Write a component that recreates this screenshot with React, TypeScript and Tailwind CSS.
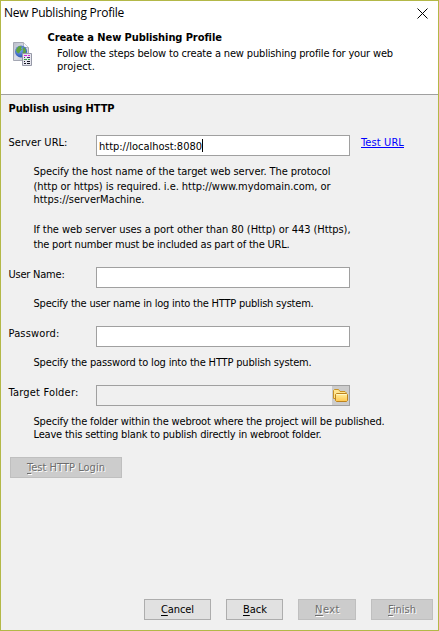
import { useLayoutEffect, useRef, useState, type ReactNode } from "react";

/** One line of text whose tracking is tuned so that it spans the given advance width. */
function Line({ w, className = "", children }: { w: number; className?: string; children: ReactNode }) {
  const ref = useRef<HTMLSpanElement>(null);
  const [spacing, setSpacing] = useState(0);
  useLayoutEffect(() => {
    const el = ref.current;
    if (!el) return;
    const count = (el.textContent ?? "").length;
    setSpacing((w - el.getBoundingClientRect().width) / count);
  }, [w]);
  return (
    <div className={`h-[13px] leading-[13px] whitespace-nowrap ${className}`}>
      <span ref={ref} style={{ letterSpacing: spacing }}>
        {children}
      </span>
    </div>
  );
}

function Field({ label, w, children }: { label: string; w: number; children: ReactNode }) {
  return (
    <div className="flex h-[21px] items-start">
      <div className="w-[88px] shrink-0 pt-px pl-[0.5px]">
        <Line w={w}>{label}</Line>
      </div>
      {children}
    </div>
  );
}

const box = "flex h-[21px] w-[254px] shrink-0 border border-[#a0a0a0]";

function Button({ text, w, disabled, className }: { text: string; w: number; disabled?: boolean; className: string }) {
  const tone = disabled
    ? "border-[#bfbfbf] bg-[#cccccc] text-[#6d6d6d] [text-shadow:1px_1px_0_#fff]"
    : "border-[#adadad] bg-[#e1e1e1] text-black";
  return (
    <button disabled={disabled} className={`h-[21px] shrink-0 border pt-[3px] pb-[3px] pl-[16px] text-left ${tone} ${className}`}>
      <Line w={w}>
        <span className="underline decoration-1 underline-offset-2">{text[0]}</span>
        {text.slice(1)}
      </Line>
    </button>
  );
}

function PublishIcon() {
  return (
    <svg width="20" height="25" viewBox="0 0 20 25" className="shrink-0">
      <defs>
        <linearGradient id="page" x2="1" y2="1">
          <stop stopColor="#b9bcc9" />
          <stop offset=".5" stopColor="#dcdfe7" />
          <stop offset="1" stopColor="#b6b9c7" />
        </linearGradient>
        <radialGradient id="globe" cx=".4" cy=".35" r=".7">
          <stop stopColor="#86b2f5" />
          <stop offset="1" stopColor="#244eb0" />
        </radialGradient>
      </defs>
      <path d="M.5.5h10l5 5v13H.5z" fill="url(#page)" stroke="#a4a7b3" />
      <path d="M10.500.5v5h5" fill="#f8f8fb" stroke="#b1b4bf" />
      <circle cx="8" cy="9.500" r="6" fill="url(#globe)" />
      <path d="M4 6l2-2 3 .5-1 2 1 1-2 2-1 2-2-1-1-2zM11 5l2 3-.5 4-2 1-1-2 1-2-1-2z" fill="#61a43d" />
      <path d="M9.500 11.500h9v12h-9z" fill="#e6e6ee" stroke="#9699a7" />
      <g shapeRendering="crispEdges">
        <path d="M11 13.500h3m1 0h2" stroke="#d423df" />
        <path d="M11 15.500h1m2 0h3" stroke="#542776" />
        <path d="M11 17.500h3m1 0h2" stroke="#36ad3e" />
        <path d="M11 19.500h1m2 0h3M11 21.500h2m1 0h3" stroke="#171724" />
      </g>
    </svg>
  );
}

function FolderIcon() {
  return (
    <svg width="15" height="13" viewBox="0 0 15 13">
      <defs>
        <linearGradient id="folder" x2="0" y2="1">
          <stop stopColor="#fff0a0" />
          <stop offset="1" stopColor="#ffc64d" />
        </linearGradient>
      </defs>
      <path d="M.5 9.500v-8l1-1h4l1.500 2h5l1 1v6z" fill="#ffe590" stroke="#c99225" />
      <path d="M2.500 5.500l1-1h10l1 1v6l-1 1h-10l-1-1z" fill="url(#folder)" stroke="#bd831d" />
      <path d="M3.500 5.500h10" stroke="#fff7c7" />
    </svg>
  );
}

export default function App() {
  return (
    <div className="flex h-[631px] w-[439px] flex-col border border-[#b3b847] bg-[#f0f0f0] font-['DejaVu_Sans_Condensed','DejaVu_Sans',sans-serif] text-[11px] font-stretch-condensed text-black">
      <header className="h-[94px] shrink-0 border-b border-[#a0a0a0] bg-white">
        <div className="flex h-[25px] justify-between pt-[5px] pr-[10px] pl-[3px]">
          <Line w={120} className="font-['Open_Sans',sans-serif] text-[12px] font-stretch-normal">New Publishing Profile</Line>
          <svg width="11" height="11" viewBox="0 0 11 11" className="mt-[2px]" stroke="#000" strokeWidth="1">
            <path d="M.5.5l10 10M10.500.5l-10 10" />
          </svg>
        </div>
        <div className="flex pt-[5px] pl-[12px]">
          <div className="mt-[11px] h-[25px]">
            <PublishIcon />
          </div>
          <div className="pl-[14.5px]">
            <Line w={174} className="font-bold">Create a New Publishing Profile</Line>
            <div className="mt-[3px] pl-[9.5px]">
              <Line w={336}>Follow the steps below to create a new publishing profile for your web</Line>
              <Line w={38}>project.</Line>
            </div>
          </div>
        </div>
      </header>

      <main className="flex-1 pt-[7px] pl-[7px]">
        <Line w={106} className="pl-[0.5px] font-bold">Publish using HTTP</Line>

        <div className="mt-[20px]">
          <Field label="Server URL:" w={59}>
            <div className={`${box} bg-white pt-[4px] pl-[2px]`}>
              <Line w={103}>http://localhost:8080</Line>
              <span className="-mt-px h-[13px] w-px bg-black" />
            </div>
            <a className="pt-px pl-[11px] text-[#0000ff]">
              <Line w={43} className="underline decoration-1 underline-offset-1">Test URL</Line>
            </a>
          </Field>
        </div>
        <div className="mt-[9px] pl-[25.5px]">
          <Line w={297}>Specify the host name of the target web server. The protocol</Line>
          <Line w={297} className="mt-[2px]">(http or https) is required. i.e. http://www.mydomain.com, or</Line>
          <Line w={111}>https://serverMachine.</Line>
          <Line w={317} className="mt-[17px]">If the web server uses a port other than 80 (Http) or 443 (Https),</Line>
          <Line w={256} className="mt-[2px]">the port number must be included as part of the URL.</Line>
        </div>

        <div className="mt-[16px]">
          <Field label="User Name:" w={56}>
            <div className={`${box} bg-white`} />
          </Field>
        </div>
        <div className="mt-[9px] pl-[25.5px]">
          <Line w={280}>Specify the user name in log into the HTTP publish system.</Line>
        </div>

        <div className="mt-[16px]">
          <Field label="Password:" w={51}>
            <div className={`${box} bg-white`} />
          </Field>
        </div>
        <div className="mt-[9px] pl-[25.5px]">
          <Line w={278}>Specify the password to log into the HTTP publish system.</Line>
        </div>

        <div className="mt-[16px]">
          <Field label="Target Folder:" w={70}>
            <div className={`${box} justify-end`}>
              <div className="flex w-[17px] items-center justify-center bg-[#cccccc]">
                <FolderIcon />
              </div>
            </div>
          </Field>
        </div>
        <div className="mt-[9px] pl-[25.5px]">
          <Line w={351}>Specify the folder within the webroot where the project will be published.</Line>
          <Line w={288}>Leave this setting blank to publish directly in webroot folder.</Line>
        </div>

        <div className="mt-[16px] flex pl-[2px]">
          <Button text="Test HTTP Login" w={78} disabled className="w-[112px]" />
        </div>
      </main>

      <footer className="flex shrink-0 justify-end pr-[5px] pb-[10px]">
        <Button text="Cancel" w={33} className="w-[67px]" />
        <Button text="Back" w={24} className="ml-[15px] w-[57px]" />
        <Button text="Next" w={25} disabled className="ml-[15px] w-[58px]" />
        <Button text="Finish" w={28} disabled className="ml-[15px] w-[62px]" />
      </footer>
    </div>
  );
}
